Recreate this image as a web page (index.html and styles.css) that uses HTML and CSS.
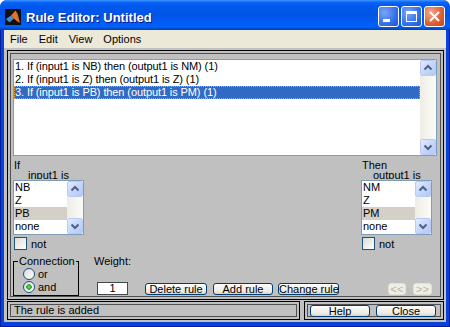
FILE: index.html
```html
<!DOCTYPE html>
<html lang="en">
<head>
  <meta charset="UTF-8">
  <title>Rule Editor: Untitled</title>
  <link rel="stylesheet" href="styles.css">
</head>
<body>
  <div class="window">
    <div class="titlebar">
      <svg class="app-icon" width="16" height="16" viewBox="0 0 16 16">
        <rect width="16" height="16" fill="#101010"/>
        <polygon points="1,10 6,6.5 9,9.5 4.5,13.5" fill="#3c8fd8"/>
        <polygon points="6,6.5 10.5,1.5 15,14 11,11.5 9,9.5" fill="#e9702a"/>
        <polygon points="10.5,1.5 12.5,5 15,14" fill="#f7c04a"/>
      </svg>
      <span class="title">Rule Editor: Untitled</span>
      <div class="caption-btns">
        <span class="cap-btn"><svg width="19" height="19" viewBox="0 0 19 19"><rect x="4" y="12" width="7" height="3" fill="#fff"/></svg></span>
        <span class="cap-btn"><svg width="19" height="19" viewBox="0 0 19 19"><rect x="4.5" y="4.5" width="10" height="10" fill="none" stroke="#fff"/><rect x="4" y="4" width="11" height="3" fill="#fff"/></svg></span>
        <span class="cap-btn close"><svg width="19" height="19" viewBox="0 0 19 19"><path d="M5 5 L14 14 M14 5 L5 14" stroke="#fff" stroke-width="2"/></svg></span>
      </div>
    </div>

    <div class="frame-body">
      <div class="menubar">
        <span>File</span>
        <span>Edit</span>
        <span>View</span>
        <span>Options</span>
      </div>

      <div class="client">
        <div class="panel main-panel">
          <div class="listbox rules-list">
            <ul class="items">
              <li>1. If (input1 is NB) then (output1 is NM) (1)</li>
              <li>2. If (input1 is Z) then (output1 is Z) (1)</li>
              <li class="selected">3. If (input1 is PB) then (output1 is PM) (1)</li>
            </ul>
            <div class="vscroll">
              <span class="sb-btn"><svg width="14" height="14" viewBox="0 0 14 14"><polyline points="3.5,8.5 7,5 10.5,8.5" fill="none" stroke="#4d6185" stroke-width="2"/></svg></span>
              <span class="sb-track"></span>
              <span class="sb-btn"><svg width="14" height="14" viewBox="0 0 14 14"><polyline points="3.5,5.5 7,9 10.5,5.5" fill="none" stroke="#4d6185" stroke-width="2"/></svg></span>
            </div>
          </div>

          <div class="vars">
            <div class="var-col">
              <div class="var-head">If</div>
              <div class="var-name input-name">input1 is</div>
              <div class="listbox var-list">
                <ul class="items">
                  <li>NB</li>
                  <li>Z</li>
                  <li class="picked">PB</li>
                  <li>none</li>
                </ul>
                <div class="vscroll">
                  <span class="sb-btn"><svg width="14" height="14" viewBox="0 0 14 14"><polyline points="3.5,8.5 7,5 10.5,8.5" fill="none" stroke="#4d6185" stroke-width="2"/></svg></span>
                  <span class="sb-track"></span>
                  <span class="sb-btn"><svg width="14" height="14" viewBox="0 0 14 14"><polyline points="3.5,5.5 7,9 10.5,5.5" fill="none" stroke="#4d6185" stroke-width="2"/></svg></span>
                </div>
              </div>
              <div class="check"><span class="check-box"></span>not</div>
            </div>

            <div class="var-col">
              <div class="var-head">Then</div>
              <div class="var-name output-name">output1 is</div>
              <div class="listbox var-list">
                <ul class="items">
                  <li>NM</li>
                  <li>Z</li>
                  <li class="picked">PM</li>
                  <li>none</li>
                </ul>
                <div class="vscroll">
                  <span class="sb-btn"><svg width="14" height="14" viewBox="0 0 14 14"><polyline points="3.5,8.5 7,5 10.5,8.5" fill="none" stroke="#4d6185" stroke-width="2"/></svg></span>
                  <span class="sb-track"></span>
                  <span class="sb-btn"><svg width="14" height="14" viewBox="0 0 14 14"><polyline points="3.5,5.5 7,9 10.5,5.5" fill="none" stroke="#4d6185" stroke-width="2"/></svg></span>
                </div>
              </div>
              <div class="check"><span class="check-box"></span>not</div>
            </div>
          </div>

          <div class="controls">
            <fieldset class="connection">
              <legend>Connection</legend>
              <div class="radio"><span class="radio-dot"></span>or</div>
              <div class="radio"><span class="radio-dot on"></span>and</div>
            </fieldset>

            <div class="weight">
              <div class="weight-label">Weight:</div>
              <div class="weight-box">1</div>
            </div>

            <div class="actions">
              <span class="xp-btn delete-btn">Delete rule</span>
              <span class="xp-btn add-btn">Add rule</span>
              <span class="xp-btn change-btn">Change rule</span>
            </div>

            <div class="nav">
              <span class="xp-btn off prev-btn">&lt;&lt;</span>
              <span class="xp-btn off next-btn">&gt;&gt;</span>
            </div>
          </div>
        </div>

        <div class="footer">
          <div class="panel status">The rule is added</div>
          <div class="panel help-box">
            <span class="xp-btn">Help</span>
            <span class="xp-btn">Close</span>
          </div>
        </div>
      </div>
    </div>
  </div>
</body>
</html>
```

FILE: styles.css
```css
* {
  box-sizing: border-box;
}
body {
  margin: 0;
  font-family: "Liberation Sans", Arial, sans-serif;
  font-size: 11px;
  color: #000;
}
.window {
  width: 450px;
  height: 327px;
  display: flex;
  flex-direction: column;
  border-radius: 7px 7px 0 0;
  overflow: hidden;
  background: #0842d8;
}

/* title bar */
.titlebar {
  height: 30px;
  flex: none;
  display: flex;
  align-items: flex-start;
  padding: 0 5px;
  background: linear-gradient(#3d95ff 0%, #0a64f5 8%, #0058ee 20%, #0055e5 50%, #005cf4 75%, #0062fa 88%, #0050d4 95%, #0040ab 100%);
}
.app-icon {
  margin-top: 9px;
  flex: none;
}
.title {
  margin: 10px 0 0 5px;
  color: #fff;
  font-size: 13px;
  font-weight: bold;
  line-height: 15px;
  text-shadow: 1px 1px #0a1883;
}
.caption-btns {
  margin: 6px 0 0 auto;
  display: flex;
  gap: 2px;
}
.cap-btn {
  width: 21px;
  height: 21px;
  border: 1px solid #fff;
  border-radius: 3px;
  background: radial-gradient(circle at 30% 30%, #78a6f8, #3470e8 60%, #1f52d0);
}
.cap-btn svg {
  display: block;
}
.cap-btn.close {
  background: radial-gradient(circle at 30% 30%, #f2a98e, #dc5f38 60%, #c2431f);
}

/* window body */
.frame-body {
  flex: 1;
  display: flex;
  flex-direction: column;
  padding: 0 4px 5px;
  box-shadow: inset 1px 0 #001ea0, inset -1px 0 #001ea0, inset 0 -1px #001ea0;
}
.menubar {
  height: 18px;
  flex: none;
  display: flex;
  padding-left: 6px;
  line-height: 18px;
  background: #ece9d8;
}
.menubar span {
  margin-right: 11px;
}
.client {
  flex: 1;
  padding: 2px 2px 0 3px;
  background: #c0c0c0;
}
.panel {
  border: 1px solid #000;
  box-shadow: inset 0 0 0 2px #c0c0c0, inset 0 0 0 3px #505050;
}
.main-panel {
  width: 437px;
  height: 250px;
}

/* list boxes */
.listbox {
  display: flex;
  border: 1px solid #7f9db9;
  background: #fff;
}
.items {
  flex: 1;
  margin: 0;
  padding: 0;
  list-style: none;
  overflow: hidden;
}
.items li {
  height: 13px;
  padding-left: 1px;
  line-height: 13px;
  white-space: nowrap;
}
.items li.selected {
  background: #316ac5;
  color: #fff;
  outline: 1px dotted #e8a33b;
  outline-offset: -1px;
}
.items li.picked {
  background: #d4d0c8;
}
.vscroll {
  width: 16px;
  flex: none;
  display: flex;
  flex-direction: column;
}
.sb-btn {
  height: 16px;
  flex: none;
  display: flex;
  align-items: center;
  justify-content: center;
  border: 1px solid #b9cbf3;
  border-radius: 2px;
  background: linear-gradient(135deg, #e4ecfe, #c6d7fb 50%, #b3c8f6);
}
.sb-track {
  flex: 1;
  background: linear-gradient(to right, #eeede5, #fbfbf8);
}
.rules-list {
  width: 424px;
  height: 97px;
  margin: 8px 0 0 5px;
}
.rules-list li {
  letter-spacing: -0.1px;
}

/* input and output columns */
.vars {
  display: flex;
  justify-content: space-between;
  margin-top: 3px;
  padding: 0 11px 0 5px;
}
.var-col {
  width: 71px;
}
.var-head {
  height: 10px;
  padding-left: 1px;
  line-height: 13px;
}
.var-name {
  height: 10px;
  margin-bottom: 1px;
  line-height: 13px;
  overflow: hidden;
  white-space: nowrap;
}
.input-name {
  padding-left: 15px;
}
.output-name {
  padding-left: 12px;
}
.var-list {
  height: 55px;
}
.check {
  display: flex;
  align-items: center;
  height: 13px;
  margin-top: 2px;
  padding-left: 1px;
}
.check-box {
  width: 13px;
  height: 13px;
  margin-right: 4px;
  border: 1px solid #1c5180;
  background: linear-gradient(135deg, #dcdbd5, #fff);
}

/* connection, weight and buttons */
.controls {
  display: flex;
  align-items: flex-start;
  padding-left: 5px;
}
.connection {
  width: 66px;
  height: 41px;
  margin: 5px 0 0;
  padding: 0;
  min-width: 0;
  border: 1px solid #000;
}
.connection legend {
  margin-left: 4px;
  padding: 0 1px;
  line-height: 12px;
}
.radio {
  display: flex;
  align-items: center;
  height: 13px;
  padding-left: 9px;
}
.radio-dot {
  width: 12px;
  height: 12px;
  margin-right: 3px;
  border: 1px solid #1c5180;
  border-radius: 50%;
  background: linear-gradient(135deg, #dcdbd5, #fff);
}
.radio-dot.on {
  background: radial-gradient(circle, #6fe06f 0, #21a121 2.5px, transparent 3px), linear-gradient(135deg, #dcdbd5, #fff);
}
.weight {
  width: 34px;
  margin: 5px 0 0 15px;
}
.weight-label {
  line-height: 13px;
}
.weight-box {
  width: 31px;
  height: 13px;
  margin: 14px 0 0 3px;
  border: 1px solid #404850;
  background: #fff;
  text-align: center;
  line-height: 11px;
}
.actions {
  display: flex;
  margin: 33px 0 0 17px;
}
.xp-btn {
  height: 12px;
  flex: none;
  border: 1px solid #003c74;
  border-radius: 3px;
  background: linear-gradient(#fff, #f4f3ee 35%, #eceae3 75%, #d8d2c6);
  text-align: center;
  line-height: 10px;
  white-space: nowrap;
}
.delete-btn {
  width: 62px;
}
.add-btn {
  width: 60px;
  margin-left: 6px;
}
.change-btn {
  width: 61px;
  margin-left: 5px;
}
.nav {
  display: flex;
  margin: 33px 0 0 49px;
}
.xp-btn.off {
  border-color: #e2e0d2;
  background: #efeee4;
  color: #b4b1a2;
}
.prev-btn {
  width: 18px;
}
.next-btn {
  width: 19px;
  margin-left: 7px;
}

/* footer */
.footer {
  display: flex;
  margin-top: 1px;
}
.status {
  width: 293px;
  height: 19px;
  padding-left: 6px;
  line-height: 17px;
}
.help-box {
  width: 140px;
  height: 19px;
  margin-left: 4px;
  display: flex;
  gap: 6px;
  padding: 3px 0 0 5px;
}
.help-box .xp-btn {
  width: 60px;
}
```
